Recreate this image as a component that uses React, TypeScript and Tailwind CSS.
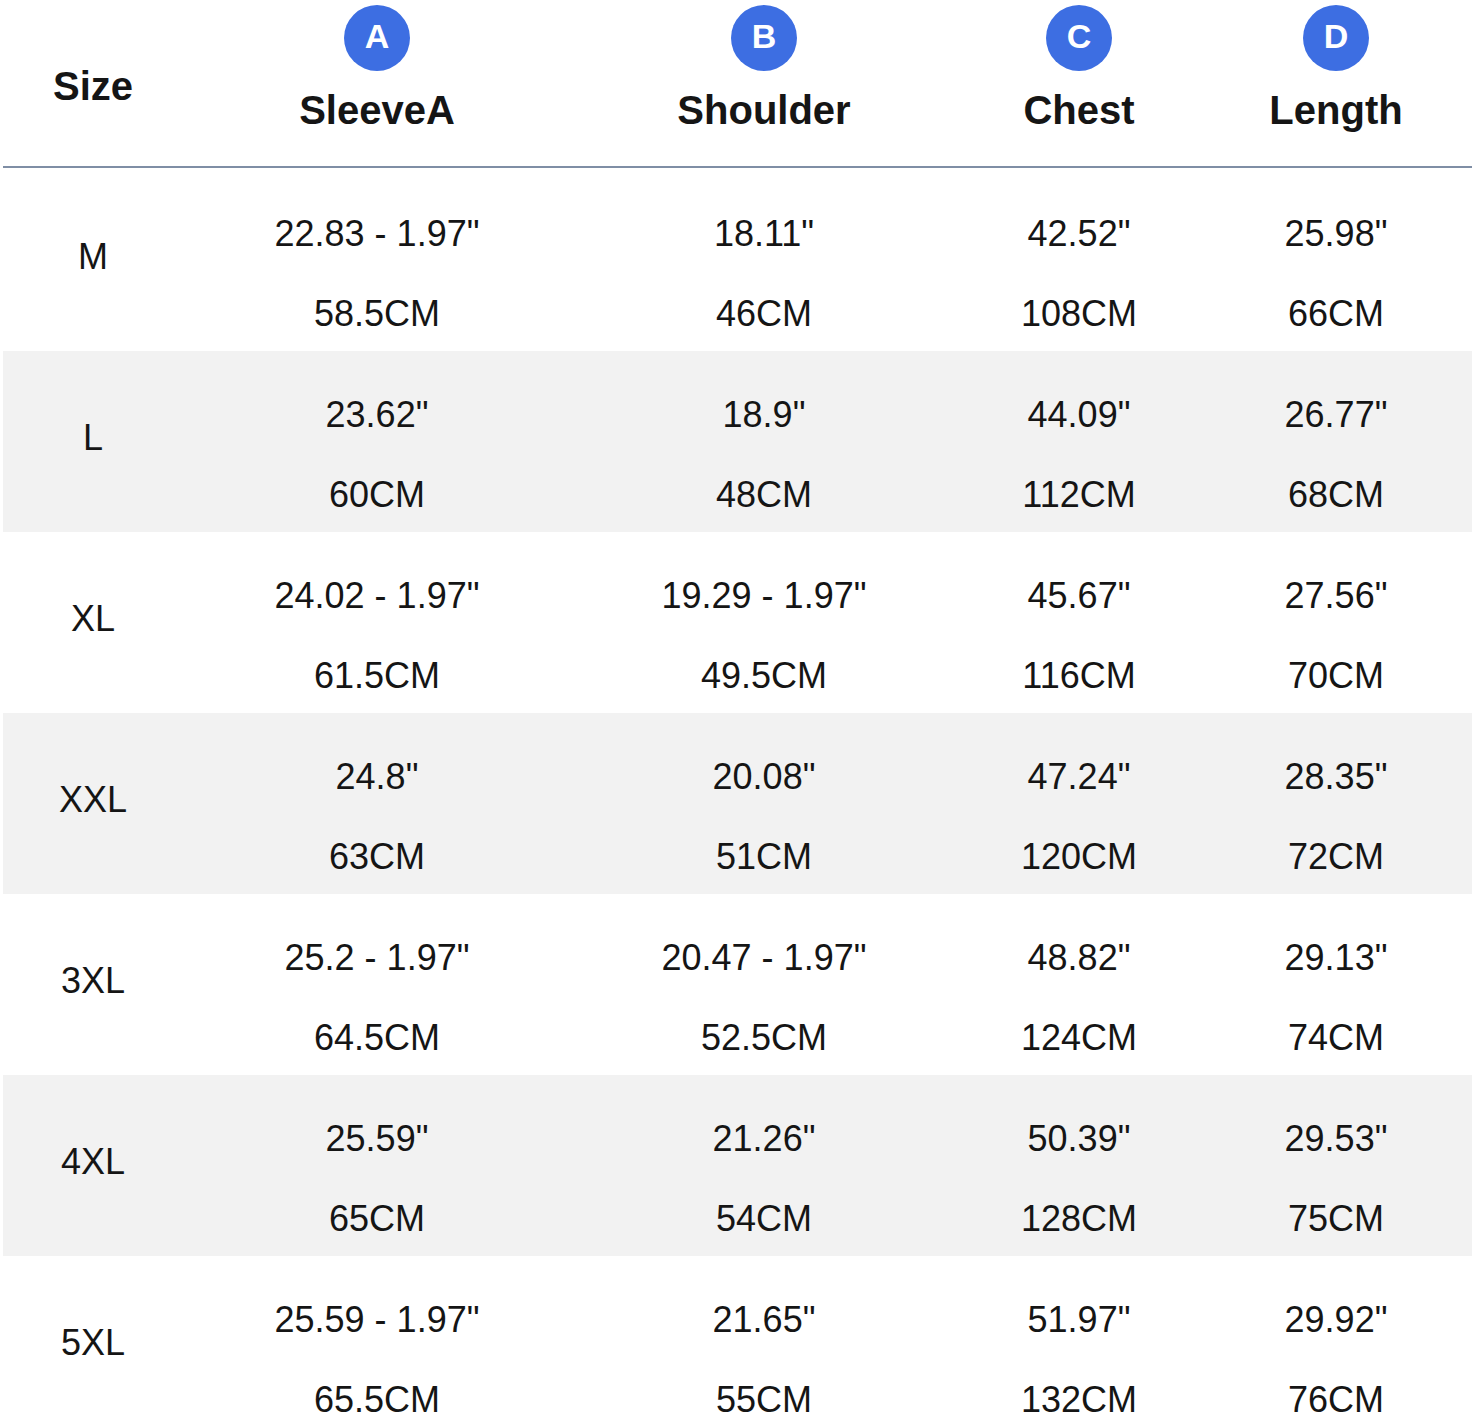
const columns = [
  { letter: 'A', label: 'SleeveA' },
  { letter: 'B', label: 'Shoulder' },
  { letter: 'C', label: 'Chest' },
  { letter: 'D', label: 'Length' },
];

const rows = [
  { size: 'M', values: [['22.83 - 1.97"', '58.5CM'], ['18.11"', '46CM'], ['42.52"', '108CM'], ['25.98"', '66CM']] },
  { size: 'L', values: [['23.62"', '60CM'], ['18.9"', '48CM'], ['44.09"', '112CM'], ['26.77"', '68CM']] },
  { size: 'XL', values: [['24.02 - 1.97"', '61.5CM'], ['19.29 - 1.97"', '49.5CM'], ['45.67"', '116CM'], ['27.56"', '70CM']] },
  { size: 'XXL', values: [['24.8"', '63CM'], ['20.08"', '51CM'], ['47.24"', '120CM'], ['28.35"', '72CM']] },
  { size: '3XL', values: [['25.2 - 1.97"', '64.5CM'], ['20.47 - 1.97"', '52.5CM'], ['48.82"', '124CM'], ['29.13"', '74CM']] },
  { size: '4XL', values: [['25.59"', '65CM'], ['21.26"', '54CM'], ['50.39"', '128CM'], ['29.53"', '75CM']] },
  { size: '5XL', values: [['25.59 - 1.97"', '65.5CM'], ['21.65"', '55CM'], ['51.97"', '132CM'], ['29.92"', '76CM']] },
];

const grid = 'grid grid-cols-[180px_388px_386px_244px_270px]';

const App = () => {
  return (
    <div className="w-[1475px] h-[1421px] overflow-hidden bg-white px-[3px] font-['Liberation_Sans',Arial,sans-serif] text-[#151515]">
      {/* Header */}
      <div className={`${grid} h-[168px] border-b-2 border-[#7f8ea5]`}>
        <div className="flex justify-center pt-[66px]">
          <span className="text-[40px] font-bold leading-none">Size</span>
        </div>
        {columns.map((col) => (
          <div key={col.letter} className="flex flex-col items-center pt-[5px]">
            <div className="w-[66px] h-[66px] rounded-full bg-[#3d6ee2] flex items-center justify-center pb-[5px]">
              <span className="text-[34px] font-bold leading-none text-white">{col.letter}</span>
            </div>
            <span className="mt-[19px] text-[40px] font-bold leading-none">{col.label}</span>
          </div>
        ))}
      </div>

      {/* Rows */}
      <div className="mt-[2px]">
        {rows.map((row, i) => (
          <div key={row.size} className={`${grid} h-[181px] ${i % 2 === 1 ? 'bg-[#f2f2f2]' : 'bg-white'}`}>
            <div className="flex justify-center pt-[69px]">
              <span className="text-[36px] leading-none">{row.size}</span>
            </div>
            {row.values.map(([inch, cm], j) => (
              <div key={j} className="flex flex-col items-center pt-[46px] gap-[44px]">
                <span className="text-[36px] leading-none">{inch}</span>
                <span className="text-[36px] leading-none">{cm}</span>
              </div>
            ))}
          </div>
        ))}
      </div>
    </div>
  );
};

export default App;
